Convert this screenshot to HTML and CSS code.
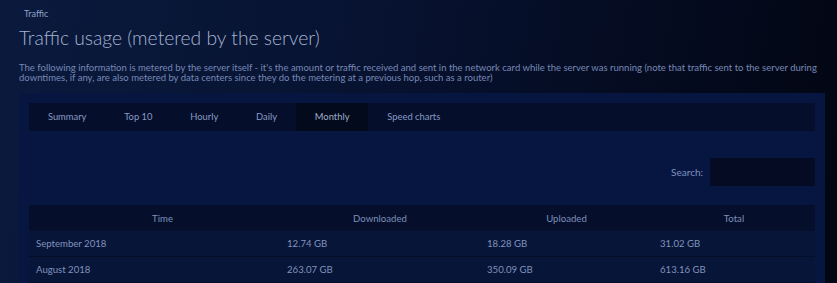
FILE: index.html
```html
<!DOCTYPE html>
<html lang="en">
<head>
    <meta charset="UTF-8">
    <meta name="viewport" content="width=device-width, initial-scale=1.0">
    <title>Traffic</title>
    <link rel="stylesheet" href="styles.css">
</head>
<body>
    <div class="page">
        <div class="breadcrumb">Traffic</div>
        <h1 class="title">Traffic usage (metered by the server)</h1>
        <p class="intro">The following information is metered by the server itself - it's the amount or traffic received and sent in the network card while the server was running (note that traffic sent to the server during downtimes, if any, are also metered by data centers since they do the metering at a previous hop, such as a router)</p>

        <div class="panel">
            <ul class="tabs">
                <li>Summary</li>
                <li>Top 10</li>
                <li>Hourly</li>
                <li>Daily</li>
                <li class="active">Monthly</li>
                <li>Speed charts</li>
            </ul>

            <div class="search-row">
                <label for="search">Search:</label>
                <input type="text" id="search">
            </div>

            <table class="traffic-table">
                <thead>
                    <tr>
                        <th class="col-time">Time</th>
                        <th class="col-down">Downloaded</th>
                        <th class="col-up">Uploaded</th>
                        <th class="col-total">Total</th>
                    </tr>
                </thead>
                <tbody>
                    <tr>
                        <td>September 2018</td>
                        <td>12.74 GB</td>
                        <td>18.28 GB</td>
                        <td>31.02 GB</td>
                    </tr>
                    <tr>
                        <td>August 2018</td>
                        <td>263.07 GB</td>
                        <td>350.09 GB</td>
                        <td>613.16 GB</td>
                    </tr>
                </tbody>
            </table>
        </div>
    </div>
</body>
</html>
```

FILE: styles.css
```css
body {
    margin: 0;
    height: 100vh;
    overflow: hidden;
    font-family: Lato, "Open Sans", sans-serif;
    background: linear-gradient(100deg, #0a1a3d 0%, #071230 45%, #040a1d 80%, #020612 100%);
    color: #8e9fc6;
}

.page {
    padding: 8px 12px 0 19px;
}

.breadcrumb {
    font-size: 9px;
    color: #8fa0c8;
    padding-left: 5px;
    line-height: 12px;
}

.title {
    margin: 6px 0 0 0;
    font-size: 19.3px;
    font-weight: 300;
    color: #a5b4d2;
    line-height: 24px;
}

.intro {
    margin: 13px 0 0 0;
    font-size: 9.52px;
    line-height: 10px;
    color: #7788b6;
}

.panel {
    margin-top: 10px;
    width: 806px;
    background-color: #061641;
    padding: 10px;
    box-sizing: border-box;
    height: 200px;
}

.tabs {
    list-style: none;
    margin: 0;
    padding: 0;
    display: flex;
    height: 28px;
    background-color: #050f2c;
}

.tabs li {
    padding: 0 18.9px;
    font-size: 9.4px;
    line-height: 28px;
    color: #8799c2;
}

.tabs li.active {
    background-color: #030a1b;
    color: #9eadcb;
}

.search-row {
    display: flex;
    justify-content: flex-end;
    align-items: center;
    gap: 7px;
    margin-top: 27px;
}

.search-row label {
    font-size: 10px;
    color: #7f92c0;
}

.search-row input {
    width: 105px;
    height: 28px;
    box-sizing: border-box;
    border: none;
    background-color: #040b22;
    outline: none;
}

.traffic-table {
    margin-top: 19px;
    width: 100%;
    border-collapse: collapse;
    font-size: 9.6px;
}

.traffic-table th {
    height: 26px;
    padding: 0;
    font-weight: normal;
    color: #7e90bb;
    background-color: #050e2b;
    text-align: center;
}

.traffic-table th.col-time {
    width: 251px;
    padding-left: 16px;
    box-sizing: border-box;
}

.traffic-table th.col-down {
    width: 200px;
}

.traffic-table th.col-up {
    width: 173px;
}

.traffic-table td {
    height: 25px;
    padding: 0 7px;
    color: #8293bd;
    background-color: #061538;
    border-bottom: 1px solid #040d29;
}
```
